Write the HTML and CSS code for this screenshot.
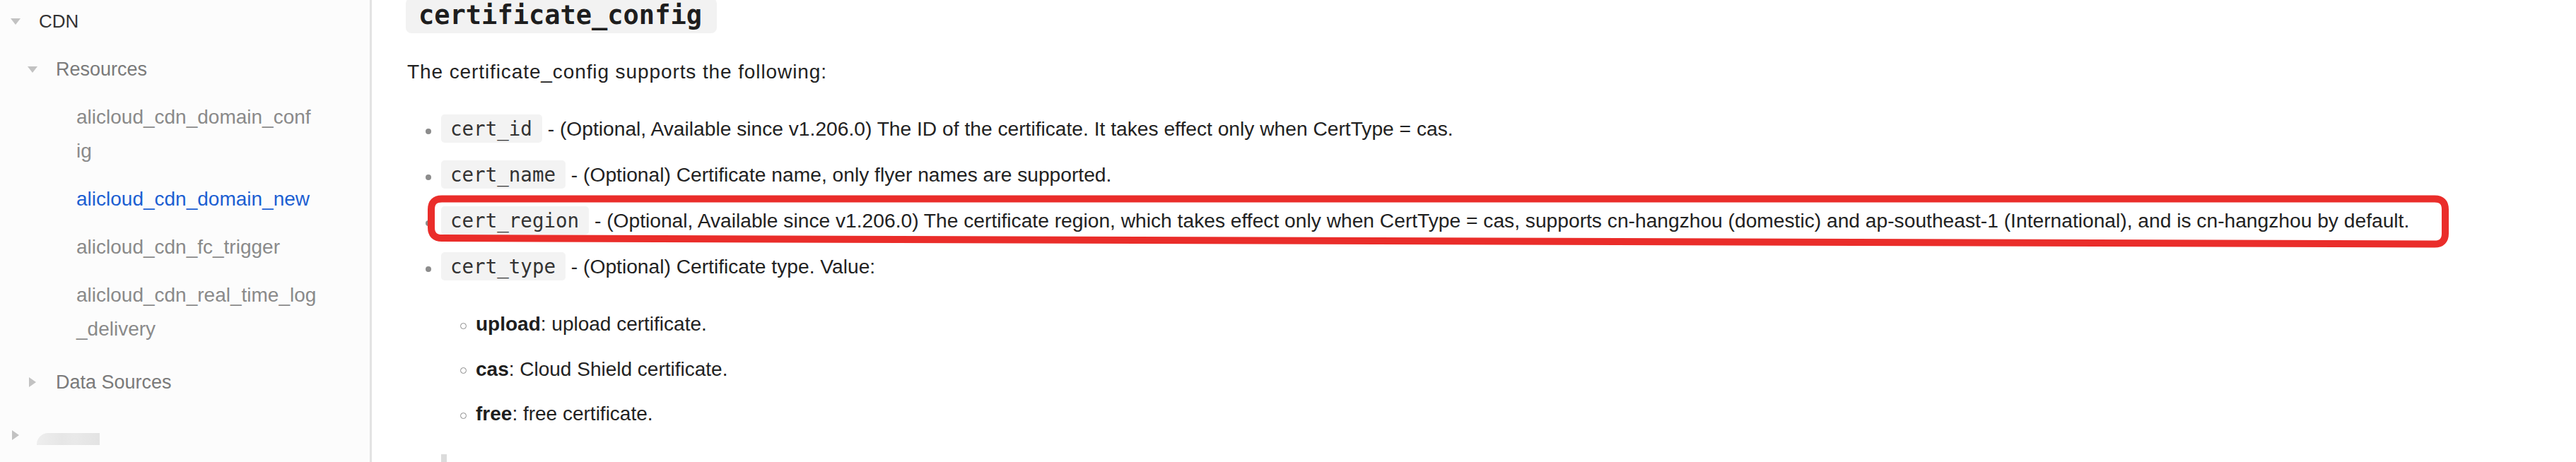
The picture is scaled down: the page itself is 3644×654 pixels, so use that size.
FILE: index.html
```html
<!DOCTYPE html>
<html lang="en">
<head>
  <meta charset="UTF-8">
  <meta name="viewport" content="width=device-width, initial-scale=1.0">
  <title>alicloud_cdn_domain_new - CDN</title>
  <link rel="stylesheet" href="styles.css">
</head>
<body>
  <div class="page">
    <aside class="sidebar">
      <ul class="nav">
        <li class="nav-group">
          <div class="nav-row level-0"><span class="caret caret-open"></span><span class="nav-title">CDN</span></div>
          <ul class="nav">
            <li class="nav-group">
              <div class="nav-row level-1"><span class="caret caret-open"></span><span class="nav-label">Resources</span></div>
              <ul class="nav-links">
                <li><a class="nav-link">alicloud_cdn_domain_conf<wbr>ig</a></li>
                <li><a class="nav-link active">alicloud_cdn_domain_new</a></li>
                <li><a class="nav-link">alicloud_cdn_fc_trigger</a></li>
                <li><a class="nav-link">alicloud_cdn_real_time_log<wbr>_delivery</a></li>
              </ul>
            </li>
            <li class="nav-group">
              <div class="nav-row level-1"><span class="caret"></span><span class="nav-label">Data Sources</span></div>
            </li>
          </ul>
        </li>
        <li class="nav-group nav-group-next">
          <div class="nav-row level-0"><span class="caret"></span><span class="redacted"></span></div>
        </li>
      </ul>
    </aside>

    <main class="content">
      <h2 class="section-title">certificate_config</h2>
      <p class="intro">The certificate_config supports the following:</p>
      <ul class="args">
        <li><code>cert_id</code> - (Optional, Available since v1.206.0) The ID of the certificate. It takes effect only when CertType = cas.</li>
        <li><code>cert_name</code> - (Optional) Certificate name, only flyer names are supported.</li>
        <li><code>cert_region</code> - (Optional, Available since v1.206.0) The certificate region, which takes effect only when CertType = cas, supports cn-hangzhou (domestic) and ap-southeast-1 (International), and is cn-hangzhou by default.</li>
        <li><code>cert_type</code> - (Optional) Certificate type. Value:
          <ul class="values">
            <li><strong>upload</strong>: upload certificate.</li>
            <li><strong>cas</strong>: Cloud Shield certificate.</li>
            <li><strong>free</strong>: free certificate.</li>
          </ul>
          <blockquote class="note"></blockquote>
        </li>
      </ul>
    </main>

    <!-- review annotation drawn over the cert_region row -->
    <svg class="highlight" width="3644" height="654" viewBox="0 0 3644 654">
      <path d="M625 281.5 H3444 Q3459 281.5 3459 296.5 V330.5 Q3459 345.5 3444 345.5 L625 337 Q610 337 610 322 V296.5 Q610 281.5 625 281.5 Z" fill="none" stroke="#ea2d2a" stroke-width="10" stroke-linejoin="round"/>
    </svg>
  </div>
</body>
</html>
```

FILE: styles.css
```css
body {
  margin: 0;
  font-family: 'Liberation Sans', Arial, Helvetica, sans-serif;
  background: #fff;
  color: #222;
}

.page {
  position: relative;
  display: flex;
  height: 654px;
  overflow: hidden;
}

/* sidebar */

.sidebar {
  flex-shrink: 0;
  width: 523px;
  background: #fcfcfc;
  border-right: 3px solid #e3e3e3;
}

.nav,
.nav-links {
  list-style: none;
  margin: 0;
  padding: 0;
}

.sidebar > .nav {
  margin-top: -4px;
}

.nav-group {
  margin-bottom: 7px;
}

.nav-group-next {
  margin-top: 17px;
}

.nav-row {
  display: flex;
  align-items: center;
  padding: 10px 0;
  line-height: 48px;
}

.level-0 {
  padding-left: 15px;
}

.level-1 {
  padding-left: 39px;
}

.caret {
  display: block;
  width: 0;
  height: 0;
  margin: 0 28px 0 2px;
  border-top: 7.5px solid transparent;
  border-bottom: 7.5px solid transparent;
  border-left: 10px solid #c2c2c2;
}

.caret-open {
  margin: 0 26px 0 0;
  border-left: 7px solid transparent;
  border-right: 7px solid transparent;
  border-top: 9px solid #c2c2c2;
  border-bottom: 0;
}

.nav-title {
  font-size: 26px;
  color: #333;
}

.nav-label {
  font-size: 27px;
  color: #7a7a7a;
}

.nav-link {
  display: block;
  width: 345px;
  padding: 10px 0 10px 108px;
  font-size: 28px;
  line-height: 48px;
  color: #8a8a8a;
}

.nav-link.active {
  color: #1c5fd2;
}

.redacted {
  display: block;
  width: 89px;
  height: 17px;
  margin: 11px 0 0 -3px;
  border-top-left-radius: 16px;
  background: linear-gradient(90deg, #eeeeee 0%, #e6e6e6 40%, #e9e9e9 60%, #e3e3e3 100%);
}

/* content */

.content {
  flex: 1;
  padding: 0 40px 0 50px;
}

.section-title {
  width: fit-content;
  margin: -3px 0 33px -2px;
  padding: 3px 21px 3px 18px;
  font-family: 'DejaVu Sans Mono', 'Liberation Mono', monospace;
  font-size: 37px;
  font-weight: bold;
  line-height: 1.2;
  color: #1e1e1e;
  background: #f2f2f2;
  border-radius: 8px;
}

.intro {
  margin: 0;
  font-size: 28px;
  line-height: 44px;
  letter-spacing: 0.9px;
}

.args {
  list-style: none;
  margin: 35.5px 0 0;
  padding-left: 48px;
  font-size: 28.2px;
}

.args > li {
  line-height: 45px;
  margin-bottom: 20px;
}

.args > li::before {
  content: "";
  display: inline-block;
  width: 8px;
  height: 8px;
  margin: 0 14px 0 -22px;
  border-radius: 50%;
  background: #8c8c8c;
  vertical-align: 2px;
}

code {
  padding: 3.5px 14px 4.5px 13px;
  font-family: 'DejaVu Sans Mono', 'Liberation Mono', monospace;
  font-size: 27.5px;
  line-height: 1;
  color: #333;
  background: #f3f3f3;
  border-radius: 5px;
}

.values {
  list-style: none;
  margin: 37.5px 0 0;
  padding-left: 49px;
  font-size: 28px;
}

.values li {
  line-height: 44px;
  margin-bottom: 19.5px;
}

.values li::before {
  content: "";
  display: inline-block;
  box-sizing: border-box;
  width: 9px;
  height: 9px;
  margin: 0 13px 0 -22px;
  border: 1.5px solid #8c8c8c;
  border-radius: 50%;
  vertical-align: 2.5px;
}

.values strong {
  color: #1e1e1e;
}

.note {
  height: 60px;
  margin: 35px 0 0;
  border-left: 8px solid #dcdcdc;
}

/* annotation */

.highlight {
  position: absolute;
  top: 0;
  left: 0;
  pointer-events: none;
}
```
